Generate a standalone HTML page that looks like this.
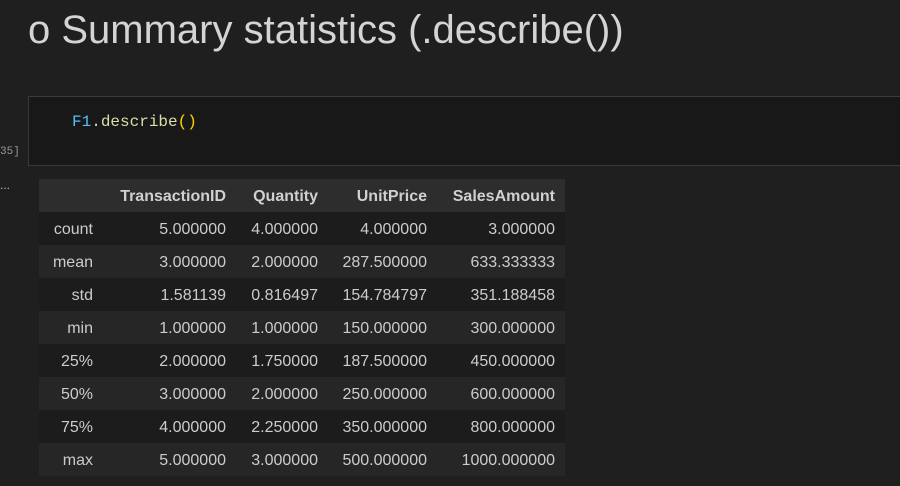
<!DOCTYPE html>
<html><head><style>
body{margin:0;width:900px;height:486px;background:#1f1f1f;overflow:hidden;font-family:"Liberation Sans",sans-serif;position:relative}
.h{position:absolute;left:28px;top:8px;font-size:40px;color:#d4d4d4;letter-spacing:0px}
.cell{position:absolute;left:28px;top:96px;width:880px;height:70px;background:#181818;border:1px solid #3a3a3a;box-sizing:border-box}
.code{position:absolute;left:72px;top:113px;font-family:"Liberation Mono",monospace;font-size:16px;color:#dcdcaa}
.lbl{position:absolute;left:0;top:146px;font-family:"Liberation Mono",monospace;font-size:11px;color:#999}
.dots{position:absolute;left:0;top:178px;font-size:12px;color:#bbb}
.row{position:absolute;left:39px;width:526px;height:33px}
.c{position:absolute;top:1px;height:33px;line-height:33px;text-align:right;font-size:16px;color:#cccccc}
.hd .c{font-weight:bold;color:#d0d0d0}
</style></head><body>
<div class="h">o Summary statistics (.describe())</div>
<div class="cell"></div>
<div class="code"><span style="color:#4fc1ff">F1</span><span style="color:#d4d4d4">.</span>describe<span style="color:#ffd700">()</span></div>
<div class="lbl">35]</div>
<div class="dots">...</div>
<div id="t"></div>
<script>
var rows=[["","TransactionID","Quantity","UnitPrice","SalesAmount"],
["count","5.000000","4.000000","4.000000","3.000000"],
["mean","3.000000","2.000000","287.500000","633.333333"],
["std","1.581139","0.816497","154.784797","351.188458"],
["min","1.000000","1.000000","150.000000","300.000000"],
["25%","2.000000","1.750000","187.500000","450.000000"],
["50%","3.000000","2.000000","250.000000","600.000000"],
["75%","4.000000","2.250000","350.000000","800.000000"],
["max","5.000000","3.000000","500.000000","1000.000000"]];
var rights=[93,226,318,427,555];
var h="";
rows.forEach(function(r,i){
 var bg=i==0?"#2d2d2d":(i%2==0?"#262626":"#1c1c1c");
 h+='<div class="row'+(i==0?' hd':'')+'" style="top:'+(179+i*33)+'px;background:'+bg+'">';
 r.forEach(function(v,j){var rr=rights[j]-39;h+='<div class="c" style="left:0;width:'+rr+'px">'+v+'</div>';});
 h+='</div>';
});
document.getElementById("t").innerHTML=h;
</script>
</body></html>
